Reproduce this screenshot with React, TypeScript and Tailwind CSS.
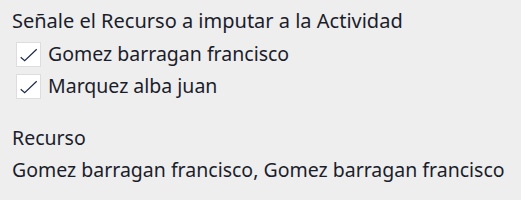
import { useState } from "react";

const recursos = ["Gomez barragan francisco", "Marquez alba juan"];

function Check({ checked }: { checked: boolean }) {
  return (
    <span className="block h-[25px] w-[25px] shrink-0 border border-[#dddddd] bg-white">
      {checked && (
        <svg width="23" height="23" viewBox="0 0 23 23" fill="none">
          <path d="M3.7 14.3 L7.7 17.7 L19.7 6.3" stroke="#1f2a4a" strokeWidth="1.2" />
        </svg>
      )}
    </span>
  );
}

export default function App() {
  const [sel, setSel] = useState<boolean[]>([true, true]);

  return (
    <div
      className="h-[200px] w-[521px] bg-[#eeeeee] px-3 pt-[5px] text-[19.5px] leading-[32px] text-[#1b1d2b]"
      style={{ fontFamily: "'Noto Sans', sans-serif" }}
    >
      <div className="mb-px text-[20px]">Señale el Recurso a imputar a la Actividad</div>
      <div className="flex flex-col pl-1">
        {recursos.map((r, i) => (
          <label
            key={r}
            className="flex h-8 cursor-pointer items-center gap-[7px]"
            onClick={() => setSel(s => s.map((v, j) => (j === i ? !v : v)))}
          >
            <Check checked={sel[i]} />
            <span>{r}</span>
          </label>
        ))}
      </div>
      <div className="mt-5">Recurso</div>
      <div>Gomez barragan francisco, Gomez barragan francisco</div>
    </div>
  );
}
